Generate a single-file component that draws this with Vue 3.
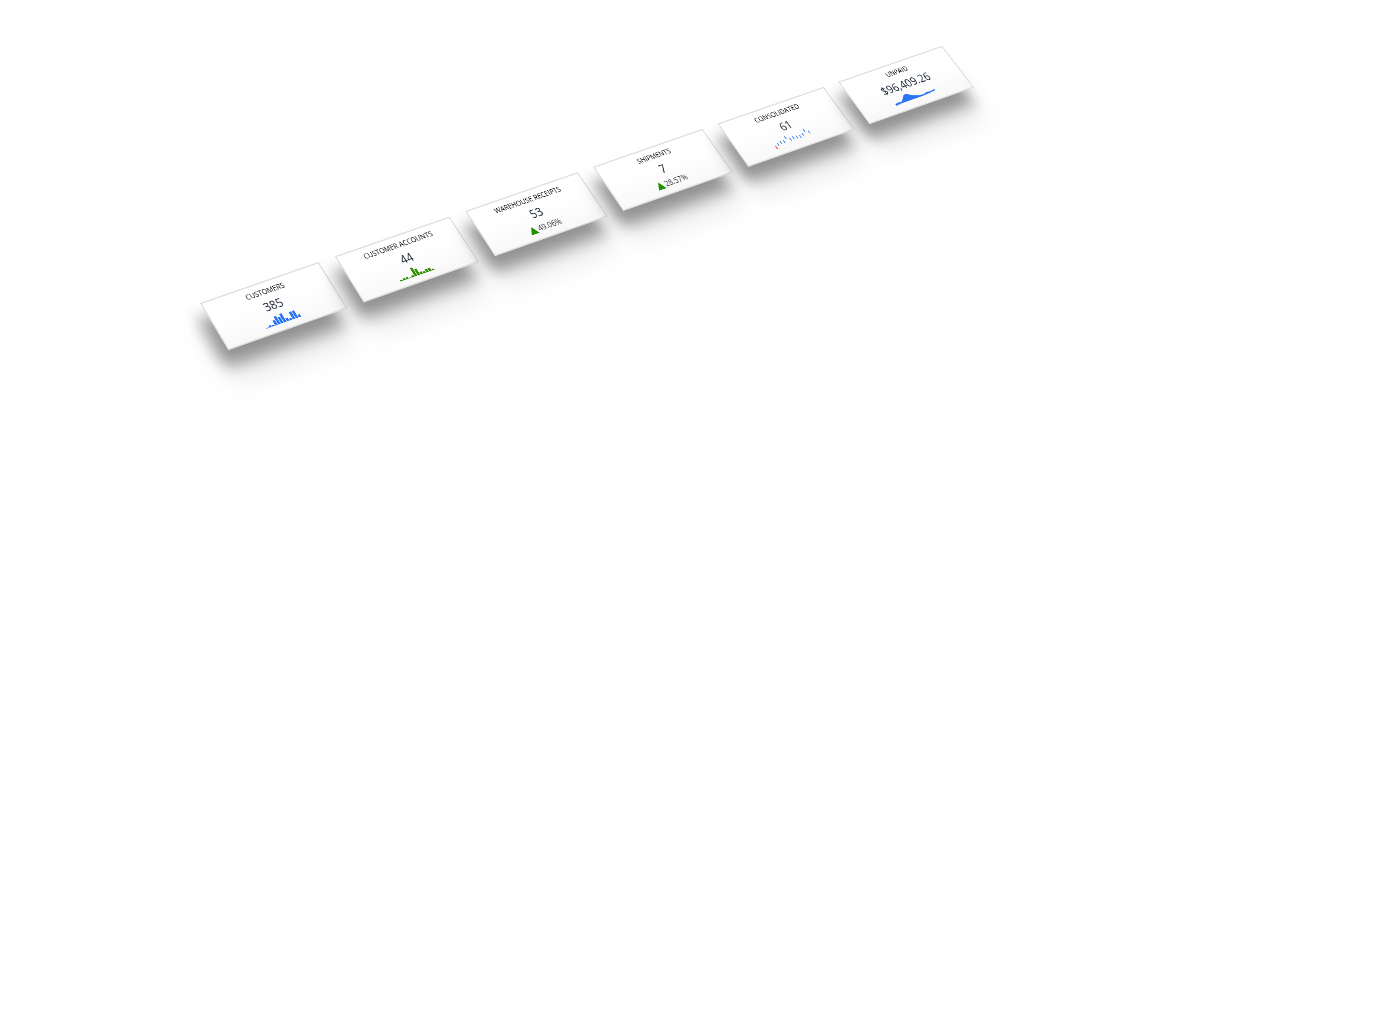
<script setup>
const bars = (heights) =>
  heights.map((h, i) => ({ x: i * 5, y: 18 - h, h }))

const cards = [
  { label: 'Customers', value: '385', bars: bars([1, 3, 2, 8, 13, 10, 14, 5, 3, 12, 12, 4]), tone: 'blue' },
  { label: 'Customer Accounts', value: '44', bars: bars([2, 3, 3, 1, 3, 14, 10, 4, 3, 5, 5, 2]), tone: 'green' },
  { label: 'Warehouse Receipts', value: '53', trend: '49.06%' },
  { label: 'Shipments', value: '7', trend: '28.57%' },
  {
    label: 'Consolidated',
    value: '61',
    ticks: [0, 4, 5, 5, 10, 5, 6, 5, 4, 6, 11, 6].map((h, i) => ({
      x: i * 6,
      y: 13 - h,
      low: i === 0,
    })),
  },
  { label: 'Unpaid', value: '$96,409.26', area: 'M0 16 V13 L6 12 L12 13 L16 10 L23 4 L28 3 L35 8 L46 12 L55 13 L62 11 L67 12 L78 11 V13 L67 14 L52 15 L36 15 L12 15 Z' },
]
</script>

<template>
  <main class="page">
    <ul class="strip">
      <li v-for="card in cards" :key="card.label" class="card">
        <h2 class="label">{{ card.label }}</h2>
        <p class="value">{{ card.value }}</p>
        <p v-if="card.trend" class="trend">
          <svg class="arrow" viewBox="0 0 14 12" aria-hidden="true"><path d="M7 0L14 12H0Z" /></svg>
          <span>{{ card.trend }}</span>
        </p>
        <svg v-else-if="card.bars" class="chart" :class="card.tone" viewBox="0 0 59 20" width="59" height="20" aria-hidden="true">
          <rect v-for="bar in card.bars" :key="bar.x" :x="bar.x" :y="bar.y" width="4" :height="bar.h" />
        </svg>
        <svg v-else-if="card.ticks" class="chart ticks" viewBox="0 0 76 20" width="76" height="20" aria-hidden="true">
          <rect v-for="tick in card.ticks" :key="tick.x" :class="{ low: tick.low }" :x="tick.x" :y="tick.y" width="2" height="5" />
        </svg>
        <svg v-else class="chart area" viewBox="0 0 78 20" width="78" height="20" aria-hidden="true">
          <path :d="card.area" />
        </svg>
      </li>
    </ul>
  </main>
</template>

<style>
body {
  margin: 0;
  background: #fff;
}
</style>

<style scoped>
.page {
  min-height: 100vh;
  overflow: hidden;
  font-family: "Open Sans", "Noto Sans", sans-serif;
}

.strip {
  display: grid;
  grid-template-columns: repeat(6, 1fr);
  gap: 28px;
  width: calc(100% - 28px);
  margin: 0;
  padding: 0;
  list-style: none;
  transform-origin: 0 0;
  transform: matrix3d(0.60564, -0.18791, 0, 0.00005935, 0.34, 0.57, 0, -0.0001026, 0, 0, 1, 0, 200, 303, 0, 1);
}

.card {
  box-sizing: border-box;
  display: flex;
  flex-direction: column;
  align-items: center;
  min-width: 0;
  height: 78px;
  padding-top: 5px;
  border: 2px solid #e0e0e0;
  background: linear-gradient(#fff 40%, #f8f8f8);
  box-shadow: -18px 22px 22px rgba(0, 0, 0, 0.36), -18px 42px 44px rgba(0, 0, 0, 0.12);
}

.label {
  margin: 0;
  font-size: 11px;
  font-weight: 400;
  line-height: 16px;
  text-transform: uppercase;
  white-space: nowrap;
  color: #000;
}

.value {
  margin: 2px 0 0;
  font-size: 18px;
  line-height: 24px;
  color: #111d2b;
}

.trend {
  display: flex;
  align-items: center;
  gap: 2px;
  margin: 2px 0 0;
  font-size: 12px;
  line-height: 20px;
  color: #333;
}

.arrow {
  width: 14px;
  height: 12px;
  fill: #209000;
}

.chart {
  display: block;
}

.blue,
.area {
  fill: #2874f5;
}

.green {
  fill: #2f8f00;
}

.ticks {
  fill: #5f96f0;
}

.low {
  fill: #f44;
}
</style>
